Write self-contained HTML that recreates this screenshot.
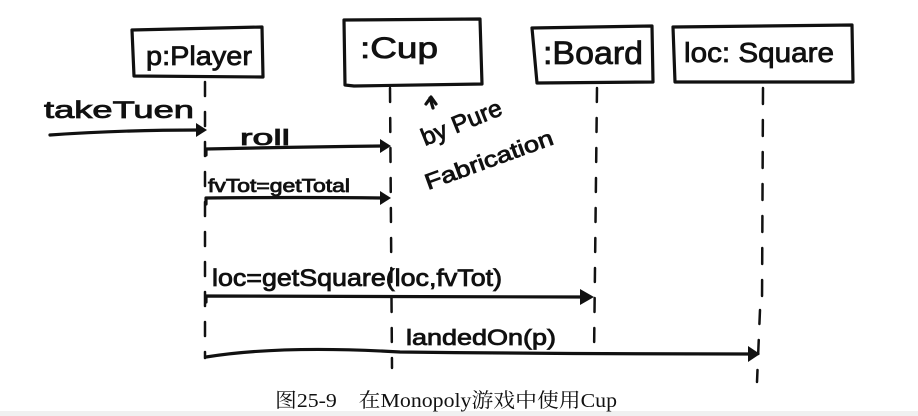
<!DOCTYPE html>
<html><head><meta charset="utf-8"><style>
html,body{margin:0;padding:0;background:#fff;width:918px;height:416px;overflow:hidden}
</style></head><body>
<svg width="918" height="416" viewBox="0 0 918 416" xmlns="http://www.w3.org/2000/svg">
<rect x="0" y="411" width="918" height="5" fill="#f0f0f0"/>
<g fill="none" stroke="#111" stroke-width="3.2" stroke-linecap="round" stroke-linejoin="round">
<path d="M132 30 L262 27 L263 77 L134 76 Z"/>
<path d="M344 20 L480 19 L482 84 L354 86 L345 85 Z"/>
<path d="M532 28 L652 26 L653 82 L537 83 Z"/>
<path d="M673 27 L852 25 L853 82 L675 82 Z"/>
<path d="M205 82 L205 358" stroke-dasharray="14 16" stroke-width="2.5"/>
<path d="M390 88 L392 368" stroke-dasharray="14 16" stroke-width="2.5"/>
<path d="M597 88 L594 357" stroke-dasharray="14 16" stroke-width="2.5"/>
<path d="M763 88 L762 305" stroke-dasharray="16 16" stroke-width="2.5"/>
<path d="M760 310 L757 382" stroke-dasharray="14 16" stroke-width="2.5"/>
<path d="M50 135 Q120 130 200 130"/>
<path d="M206 155 L206 149 Q300 147 384 146"/>
<path d="M206 204 L206 198 Q300 197 384 198"/>
<path d="M206 302 L206 296 Q400 297 584 297"/>
<path d="M206 357 Q280 345 400 352 Q580 354 750 354"/>
<path d="M433 108 L430 98 M426 104 L431 97 L436 104"/>
</g>
<g fill="#111">
<path d="M196 123 L207 130 L196 137 Z"/>
<path d="M380 139 L391 146 L380 153 Z"/>
<path d="M380 191 L391 198 L380 205 Z"/>
<path d="M580 289 L594 297 L580 305 Z"/>
<path d="M748 346 L760 354 L748 362 Z"/>
</g>
<g font-family="'Liberation Sans Narrow','Liberation Sans',sans-serif" fill="#111" font-weight="normal" stroke="#111" stroke-width="0.8">
<text x="146" y="65" font-size="27" textLength="106" lengthAdjust="spacingAndGlyphs">p:Player</text>
<text x="360" y="58" font-size="30" textLength="78" lengthAdjust="spacingAndGlyphs">:Cup</text>
<text x="543" y="64" font-size="32" textLength="100" lengthAdjust="spacingAndGlyphs">:Board</text>
<text x="684" y="62" font-size="28" textLength="150" lengthAdjust="spacingAndGlyphs">loc: Square</text>
<text x="44" y="118" font-size="24" textLength="150" lengthAdjust="spacingAndGlyphs">takeTuen</text>
<text x="240" y="145" font-size="22" textLength="50" lengthAdjust="spacingAndGlyphs">roll</text>
<text x="208" y="192" font-size="18" textLength="142" lengthAdjust="spacingAndGlyphs">fvTot=getTotal</text>
<text x="212" y="286" font-size="24" textLength="290" lengthAdjust="spacingAndGlyphs">loc=getSquare(loc,fvTot)</text>
<text x="406" y="345" font-size="22" textLength="150" lengthAdjust="spacingAndGlyphs">landedOn(p)</text>
<text transform="translate(425,146) rotate(-22)" font-size="24" textLength="85" lengthAdjust="spacingAndGlyphs">by Pure</text>
<text transform="translate(428,190) rotate(-20)" font-size="22" textLength="135" lengthAdjust="spacingAndGlyphs">Fabrication</text>
</g>
<text x="275" y="407" font-family="'Liberation Serif','Noto Serif CJK SC',serif" font-size="20" fill="#111" textLength="342" lengthAdjust="spacingAndGlyphs">图25-9　在Monopoly游戏中使用Cup</text>
</svg>
</body></html>
